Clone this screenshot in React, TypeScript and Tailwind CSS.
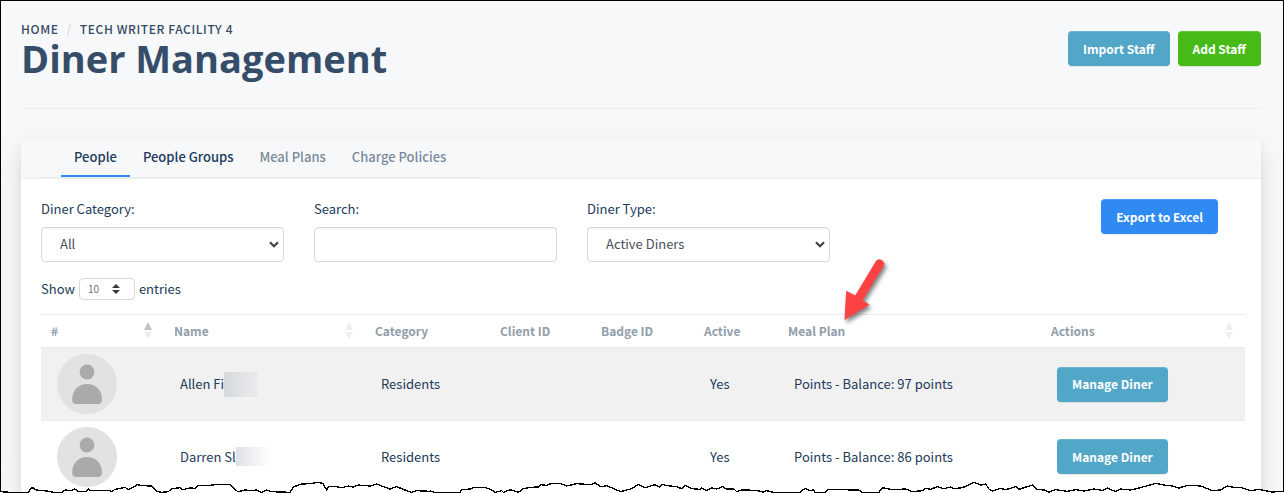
import type { ReactNode } from "react";

const tabs = [
  { label: "People", active: true, muted: false },
  { label: "People Groups", active: false, muted: false },
  { label: "Meal Plans", active: false, muted: true },
  { label: "Charge Policies", active: false, muted: true },
];

const columns = [
  { label: "#", width: "w-[123px]", sort: "asc" },
  { label: "Name", width: "w-[201px]", sort: "both" },
  { label: "Category", width: "w-[125px]" },
  { label: "Client ID", width: "w-[101px]" },
  { label: "Badge ID", width: "w-[103px]" },
  { label: "Active", width: "w-[84px]" },
  { label: "Meal Plan", width: "w-[263px]", pointer: true },
  { label: "Actions", width: "", sort: "both" },
];

const diners = [
  {
    name: "Allen Fi",
    mask: "h-[25px] w-[34px] bg-linear-to-r from-[#d6dadd] to-[#ebebed]",
    category: "Residents",
    active: "Yes",
    plan: "Points - Balance: 97 points",
  },
  {
    name: "Darren Sl",
    mask: "h-[19px] w-[35px] bg-linear-to-r from-[#dfe2e8] to-white",
    category: "Residents",
    active: "Yes",
    plan: "Points - Balance: 86 points",
  },
];

const tones = {
  info: "bg-[#52a6c7]",
  success: "bg-[#47ba18]",
  primary: "bg-[#308af3]",
};

function Button({ tone, children }: { tone: keyof typeof tones; children: ReactNode }) {
  return (
    <button
      type="button"
      className={`${tones[tone]} h-[35px] rounded-[4px] px-[15px] text-[12px] leading-5 font-bold whitespace-nowrap text-white shadow-[inset_0_1px_0_rgba(255,255,255,0.15),0_1px_1px_rgba(0,0,0,0.08)]`}
    >
      {children}
    </button>
  );
}

const field =
  "h-[35px] w-full rounded-[4px] border border-[#d5d9dd] bg-white text-[13px] text-[#495057] shadow-[inset_0_1px_1px_rgba(0,0,0,0.05)]";

function SelectField({ id, label, value }: { id: string; label: string; value: string }) {
  return (
    <div className="w-[243px]">
      <label htmlFor={id} className="block leading-5">{label}</label>
      <div className="relative mt-2">
        <select id={id} className={`${field} block appearance-none pr-6 pb-0.5 pl-[18px]`}>
          <option>{value}</option>
        </select>
        <svg viewBox="0 0 10 7" className="pointer-events-none absolute top-3.5 right-[5px] h-[7px] w-2.5" aria-hidden="true">
          <path d="M1 1.200l4 4 4-4" fill="none" stroke="#3d444b" strokeWidth="2.2" />
        </svg>
      </div>
    </div>
  );
}

function Avatar() {
  return (
    <svg viewBox="0 0 60 60" className="block size-[60px]" aria-hidden="true">
      <circle cx="30" cy="30" r="30" fill="#e2e2e2" />
      <circle cx="30" cy="18" r="7.4" fill="#aaa" />
      <path d="M15.2 45.5C15.2 36 21.5 30 30 30s15 6 15 15.5c0 3-1.5 4.5-4.5 4.5h-21c-3 0-4.3-1.500-4.300-4.500z" fill="#aaa" />
    </svg>
  );
}

function SortIcon({ sort }: { sort: string }) {
  return (
    <svg viewBox="0 0 8 17" className="h-[17px] w-2" aria-hidden="true">
      <path d="M4 0l4 8H0z" fill={sort === "asc" ? "#bcc3cb" : "#eceef0"} />
      <path d="M4 17l4-7H0z" fill="#eceef0" />
    </svg>
  );
}

function Pointer() {
  return (
    <svg
      viewBox="0 0 50 76"
      className="pointer-events-none absolute -top-[60px] left-[62px] z-10 h-[76px] w-[50px] drop-shadow-[2px_3px_2px_rgba(0,0,0,0.5)]"
      aria-hidden="true"
    >
      <path
        d="M4.500 65L6.200 35.700 15.200 40.600 35.800 6.300a4.600 4.600 0 0 1 7.800 4.800L22.500 45.200 29.500 49.700z"
        fill="#fd4244"
      />
    </svg>
  );
}

const tornPieces = [
  {
    shift: "translate(0 1020)",
    points:
      "0,455 30,457 85,457 92,445 100,443 108,450 140,453 160,457 185,457 195,450 215,452 225,447 235,455 258,455 265,447 270,452 330,452 335,455 345,448 375,442 385,449 400,442 412,434 425,437 455,438 468,453 485,457 505,455 515,446 540,443 548,449 570,444 585,445 595,436 625,437 650,433 690,434 705,450 715,455 735,450 755,452 770,450 785,457 800,450 815,455 870,457 880,441 905,432 935,431 950,427 968,430 980,449 985,440 1010,440 1025,443 1045,438 1060,441 1075,435 1110,438 1130,432 1150,440 1170,447 1190,440 1215,450 1235,457 1250,452 1290,454",
  },
  {
    shift: "translate(1290 1020)",
    points:
      "0,453 15,457 90,457 95,449 122,447 132,442 168,443 185,450 195,457 215,452 220,457 240,449 265,457 280,446 300,442 325,441 332,434 350,436 365,430 390,430 410,438 440,431 485,434 495,428 512,440 530,437 560,450 572,455 590,450 605,446 625,433 645,443 675,434 690,441 697,433 705,436 740,440 755,446 765,436 785,446 810,448 815,444 830,452 845,444 860,447 878,440 890,447 912,447 920,455 935,450 980,451 1000,457 1010,452 1030,457 1110,457 1125,445 1140,452 1150,450 1155,457 1185,457 1195,448 1272,450",
  },
  {
    shift: "translate(2562 900)",
    points:
      "0,570 15,570 25,577 75,577 85,563 115,569 155,567 175,575 205,572 215,565 230,568 250,560 270,566 290,561 300,566 325,563 345,555 360,547 380,555 395,552 405,567 415,573 440,565 455,569 485,560 495,568 510,563 535,555 550,568 570,570 585,576 605,569 640,574 665,569 690,573 720,567 745,571 760,564 785,575 800,567 830,570 855,564 885,556 905,550 930,555 955,558 975,564 1000,556 1040,558 1075,572 1100,570 1120,558 1140,562 1160,562 1190,572 1215,568 1255,576 1290,574",
  },
];

function TornEdge() {
  return (
    <svg
      viewBox="0 1410 3852 69"
      preserveAspectRatio="none"
      className="pointer-events-none absolute inset-x-0 bottom-0 z-20 h-[23px] w-full"
      shapeRendering="crispEdges"
      aria-hidden="true"
    >
      {tornPieces.map((piece) => (
        <g key={piece.shift} transform={piece.shift}>
          <polygon points={`0,600 ${piece.points} 1290,600`} fill="#fff" />
          <polyline points={piece.points} fill="none" stroke="#000" strokeWidth="4" />
        </g>
      ))}
    </svg>
  );
}

export default function App() {
  return (
    <div className="relative min-h-screen overflow-hidden font-['Noto_Sans_CJK_SC',sans-serif] text-[#213a5a]">
      <div className="flex min-h-screen flex-col border-x border-t border-black bg-[#f7f8fa] pr-[22px] pl-5">
        <header className="flex items-start justify-between border-b border-[#eceef0] pt-5 pb-[29px]">
          <div>
            <nav aria-label="Breadcrumb" className="flex gap-2 text-[12px] leading-4 font-medium tracking-wider text-[#364a63] uppercase">
              <a href="#home">Home</a>
              <span className="font-normal text-[#ccd1d6]">/</span>
              <a href="#facility">Tech Writer Facility 4</a>
            </nav>
            <h1 className="font-['Open_Sans',sans-serif] text-[38px] leading-[42px] font-bold text-[#364d69]">
              Diner Management
            </h1>
          </div>
          <div className="flex gap-2 pt-2.5">
            <Button tone="info">Import Staff</Button>
            <Button tone="success">Add Staff</Button>
          </div>
        </header>

        <main className="mt-[30px] flex grow flex-col rounded-t-[4px] bg-white shadow-[0_7px_35px_rgba(4,9,20,0.06),0_15px_22px_rgba(4,9,20,0.06),0_4px_8px_rgba(4,9,20,0.05)]">
          <div className="rounded-t-[4px] border-b border-[#eceef0] bg-[#f7f8fa] pl-5">
            <nav aria-label="Diner sections" className="flex w-fit border-b border-[#e9ebed] pr-5 pl-5">
              {tabs.map((tab) => (
                <a
                  key={tab.label}
                  href="#tab"
                  className={`flex h-[38px] items-center border-b-2 px-[13px] text-[13px] leading-5 font-medium ${
                    tab.active ? "border-[#308af3]" : "border-transparent"
                  } ${tab.muted ? "text-[#7b8a9a]" : "text-[#213a5a]"}`}
                >
                  {tab.label}
                </a>
              ))}
            </nav>
          </div>

          <div className="pt-5 pr-4 pl-5 text-[13px] leading-5">
            <div className="flex items-start justify-between pr-[27px]">
              <div className="flex gap-[30px]">
                <SelectField id="category" label="Diner Category:" value="All" />
                <div className="w-[243px]">
                  <label htmlFor="search" className="block leading-5">Search:</label>
                  <input id="search" type="text" className={`${field} mt-2 block px-3`} />
                </div>
                <SelectField id="type" label="Diner Type:" value="Active Diners" />
              </div>
              <Button tone="primary">Export to Excel</Button>
            </div>

            <label className="mt-4 flex items-center gap-1">
              Show
              <span className="relative">
                <select className="block h-[22px] w-14 appearance-none rounded-[4px] border border-[#d5d9dd] bg-white pl-2 text-[10px] leading-4 text-[#6b7280]">
                  <option>10</option>
                </select>
                <svg viewBox="0 0 8 10" className="pointer-events-none absolute top-1.5 right-[15px] h-2.5 w-2" aria-hidden="true">
                  <path d="M4 0l4 4H0zM4 10l4-4H0z" fill="#343a40" />
                </svg>
              </span>
              entries
            </label>

            <table className="mt-3.5 w-full table-fixed border-collapse text-left">
              <thead>
                <tr className="h-[33px] border-t border-b-2 border-t-[#e9ebed] border-b-[#ececec] text-[12px] text-[#919eab]">
                  {columns.map((col) => (
                    <th key={col.label} className={`${col.width} relative pr-3 pl-2.5 font-bold`}>
                      <div className="flex items-center justify-between">
                        {col.label}
                        {col.sort && <SortIcon sort={col.sort} />}
                      </div>
                      {col.pointer && <Pointer />}
                    </th>
                  ))}
                </tr>
              </thead>
              <tbody>
                {diners.map((diner) => (
                  <tr key={diner.name} className="h-[73px] border-t border-[#ececec] last:h-[72px] odd:bg-[#f1f1f1]">
                    <td className="px-4"><Avatar /></td>
                    <td className="px-4">
                      <div className="flex items-center">
                        {diner.name}
                        <span className={diner.mask} />
                      </div>
                    </td>
                    <td className="px-4">{diner.category}</td>
                    <td />
                    <td />
                    <td className="px-4">{diner.active}</td>
                    <td className="px-4">{diner.plan}</td>
                    <td className="px-4"><Button tone="info">Manage Diner</Button></td>
                  </tr>
                ))}
              </tbody>
            </table>
          </div>
        </main>
      </div>
      <TornEdge />
    </div>
  );
}
